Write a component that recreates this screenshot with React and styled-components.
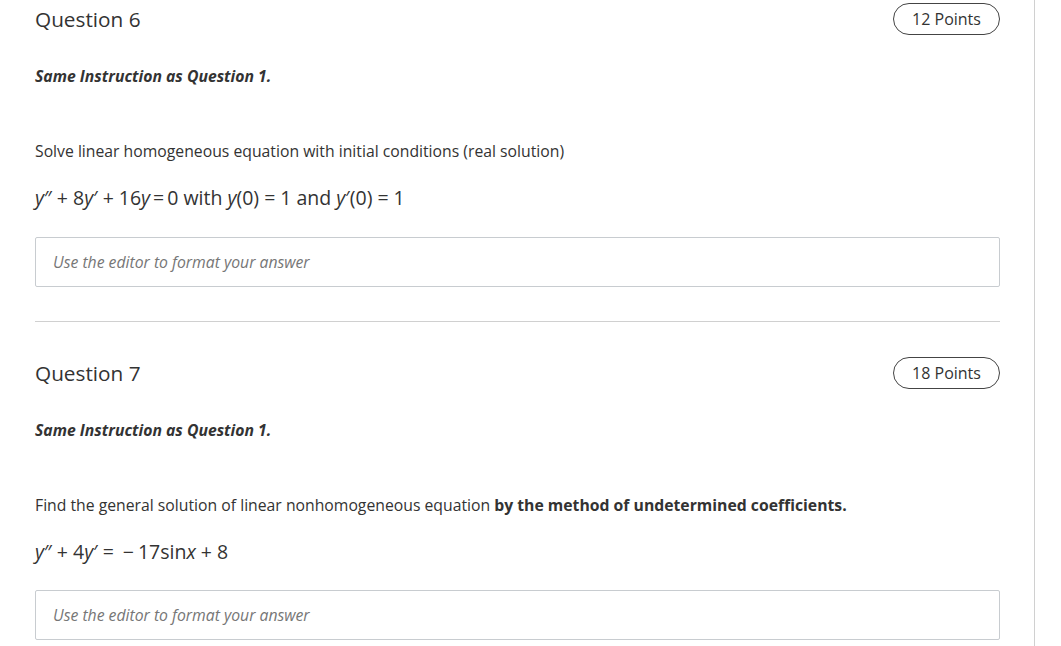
import React from "react";
import styled, { createGlobalStyle } from "styled-components";

const Global = createGlobalStyle`
  html, body { margin: 0; padding: 0; background: #fff; }
  body { font-family: "Open Sans", "Liberation Sans", sans-serif; color: #333; }
`;

const Page = styled.div`
  width: 1035px;
  min-height: 646px;
  box-sizing: border-box;
  border-right: 1px solid #d0d0d0;
  padding: 3px 35px 0 35px;
`;

const Column = styled.div`
  width: 965px;
`;

const Section = styled.section`
  padding-top: ${(p) => p.$top || 0}px;
`;

const Header = styled.div`
  display: flex;
  align-items: center;
  justify-content: space-between;
  height: 32px;
`;

const Title = styled.h2`
  margin: 0;
  font-size: 20.75px;
  font-weight: 400;
  line-height: 26px;
  color: #333;
`;

const Pill = styled.div`
  box-sizing: border-box;
  height: 32px;
  width: 107px;
  border: 1px solid #444;
  border-radius: 16px;
  display: flex;
  align-items: center;
  justify-content: center;
  font-size: 16px;
  color: #333;
`;

const Instruction = styled.p`
  margin: 31px 0 0;
  font-size: 15.75px;
  line-height: 20px;
  font-weight: 700;
  font-style: italic;
  color: #333;
`;

const Prompt = styled.p`
  margin: 55px 0 0;
  font-size: 15.75px;
  line-height: 20px;
  color: #333;
  b { font-weight: 700; }
`;

const Equation = styled.div`
  margin-top: 25px;
  font-size: 19.5px;
  line-height: 24px;
  color: #333;
  white-space: pre;
`;

const V = styled.span`
  font-style: italic;
`;

const Op = styled.span`
  margin: 0 ${(p) => p.$gap ?? 5}px;
`;

const AnswerBox = styled.div`
  margin-top: ${(p) => p.$top || 27}px;
  box-sizing: border-box;
  height: 50px;
  border: 1px solid #c8ccd0;
  border-radius: 2px;
  padding: 0 17px;
  display: flex;
  align-items: center;
  font-size: 15.75px;
  font-style: italic;
  color: #767676;
`;

const Divider = styled.hr`
  margin: 34px 0 0;
  border: 0;
  border-top: 1px solid #d0d0d0;
  height: 0;
`;

export default function App() {
  return (
    <>
      <Global />
      <Page>
        <Column>
          <Section>
            <Header>
              <Title>Question 6</Title>
              <Pill>12 Points</Pill>
            </Header>
            <Instruction>Same Instruction as Question 1.</Instruction>
            <Prompt>Solve linear homogeneous equation with initial conditions (real solution)</Prompt>
            <Equation>
              <V>y</V>″<Op>+</Op>8<V>y</V>′<Op>+</Op>16<V>y</V><Op $gap={3}>=</Op>0 with <V>y</V>(0)<Op $gap={5}>=</Op>1 and <V>y</V>′(0)<Op $gap={5}>=</Op>1
            </Equation>
            <AnswerBox>Use the editor to format your answer</AnswerBox>
            <Divider />
          </Section>
          <Section $top={35}>
            <Header>
              <Title>Question 7</Title>
              <Pill>18 Points</Pill>
            </Header>
            <Instruction>Same Instruction as Question 1.</Instruction>
            <Prompt>
              Find the general solution of linear nonhomogeneous equation <b>by the method of undetermined coefficients.</b>
            </Prompt>
            <Equation>
              <V>y</V>″<Op>+</Op>4<V>y</V>′<Op>=</Op><Op $gap={4}>−</Op>17sin<V>x</V><Op>+</Op>8
            </Equation>
            <AnswerBox $top={26}>Use the editor to format your answer</AnswerBox>
          </Section>
        </Column>
      </Page>
    </>
  );
}
